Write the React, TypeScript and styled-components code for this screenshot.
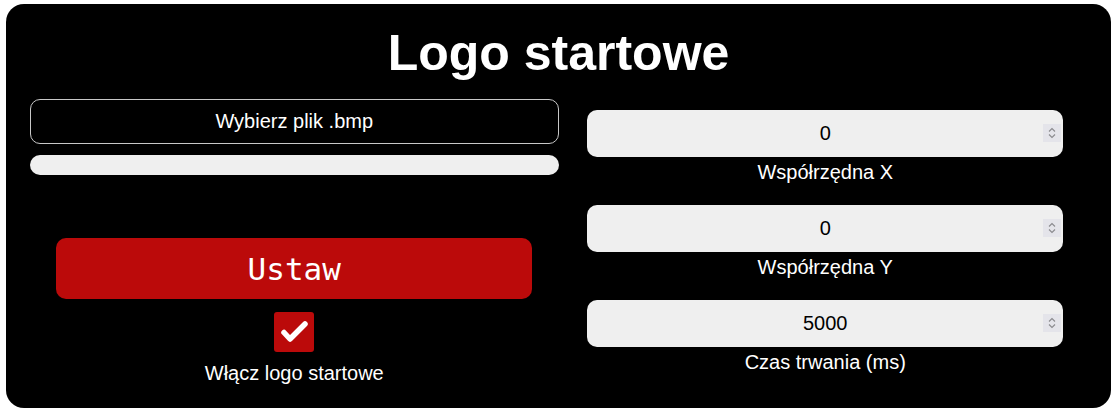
import React from "react";
import styled, { createGlobalStyle } from "styled-components";

const GlobalStyle = createGlobalStyle`
  body {
    margin: 0;
    background: #ffffff;
    font-family: "Liberation Sans", Arial, sans-serif;
  }
`;

function App() {
  return (
    <Page>
      <GlobalStyle />
      <Panel>
        <Title>Logo startowe</Title>
        <Columns>
          <LeftColumn>
            <FileButton type="button">Wybierz plik .bmp</FileButton>
            <Progress />
            <SetButton type="button">Ustaw</SetButton>
            <CheckBox role="checkbox" aria-checked="true">
              <svg width="40" height="40" viewBox="0 0 40 40">
                <polyline
                  points="10,20.5 16,27 31,12"
                  fill="none"
                  stroke="#ffffff"
                  strokeWidth="5.5"
                  strokeLinecap="round"
                  strokeLinejoin="round"
                />
              </svg>
            </CheckBox>
            <Caption>Włącz logo startowe</Caption>
          </LeftColumn>
          <RightColumn>
            {fields.map((field) => (
              <Field key={field.label}>
                <InputWrap>
                  <NumberInput type="number" defaultValue={field.value} />
                  <Spinner>
                    <svg width="18" height="18" viewBox="0 0 18 18">
                      <path
                        d="M6 7.5 L9 4.5 L12 7.5 M6 10.5 L9 13.5 L12 10.5"
                        fill="none"
                        stroke="#8a8a8e"
                        strokeWidth="1.1"
                      />
                    </svg>
                  </Spinner>
                </InputWrap>
                <FieldCaption>{field.label}</FieldCaption>
              </Field>
            ))}
          </RightColumn>
        </Columns>
      </Panel>
    </Page>
  );
}

const Page = styled.div`
  padding: 4px 7px 6px 6px;
`;
const Panel = styled.div`
  background: #000000;
  border-radius: 18px;
  padding: 22px 24px 23px;
  color: #ffffff;
`;
const Title = styled.h1`
  margin: 0 0 18px;
  font-size: 50px;
  line-height: 55px;
  font-weight: 700;
  text-align: center;
`;
const Columns = styled.div`
  display: grid;
  grid-template-columns: 1fr 1fr;
  align-items: center;
`;
const LeftColumn = styled.div`
  display: flex;
  flex-direction: column;
  align-items: center;
`;
const RightColumn = styled.div`
  display: flex;
  flex-direction: column;
  align-items: center;
  gap: 21px;
  padding-left: 5px;
`;
const FileButton = styled.button`
  width: 100%;
  height: 45px;
  background: #000000;
  border: 1px solid #c8c8c8;
  border-radius: 10px;
  color: #ffffff;
  font-family: "Liberation Sans", Arial, sans-serif;
  font-size: 20px;
  cursor: pointer;
`;
const Progress = styled.div`
  width: 100%;
  height: 20px;
  margin-top: 11px;
  background: #efefef;
  border-radius: 10px;
`;
const SetButton = styled.button`
  width: 90%;
  height: 61px;
  margin-top: 63px;
  background: #bb0a0a;
  border: none;
  border-radius: 10px;
  color: #ffffff;
  font-family: "DejaVu Sans Mono", "Liberation Mono", monospace;
  font-size: 31px;
  cursor: pointer;
`;
const CheckBox = styled.div`
  width: 40px;
  height: 40px;
  margin-top: 13px;
  background: #bb0a0a;
  border-radius: 3px;
  display: flex;
  svg {
    display: block;
  }
`;
const Caption = styled.div`
  margin-top: 10px;
  font-size: 20px;
  line-height: 23px;
  text-align: center;
`;
const FieldCaption = styled(Caption)`
  margin-top: 4px;
`;
const Field = styled.div`
  width: 91%;
  display: flex;
  flex-direction: column;
  align-items: center;
`;
const InputWrap = styled.div`
  position: relative;
  width: 100%;
`;
const NumberInput = styled.input`
  display: block;
  box-sizing: border-box;
  width: 100%;
  height: 47px;
  padding: 0;
  background: #efefef;
  border: none;
  border-radius: 10px;
  color: #000000;
  font-family: "Liberation Sans", Arial, sans-serif;
  font-size: 20px;
  text-align: center;
  outline: none;
  -moz-appearance: textfield;
  &::-webkit-inner-spin-button,
  &::-webkit-outer-spin-button {
    -webkit-appearance: none;
    margin: 0;
  }
`;
const Spinner = styled.span`
  position: absolute;
  right: 2px;
  top: 14px;
  width: 18px;
  height: 18px;
  background: #e4e4ea;
  svg {
    display: block;
  }
`;
const fields = [
  { label: "Współrzędna X", value: 0 },
  { label: "Współrzędna Y", value: 0 },
  { label: "Czas trwania (ms)", value: 5000 },
];

export default App;
